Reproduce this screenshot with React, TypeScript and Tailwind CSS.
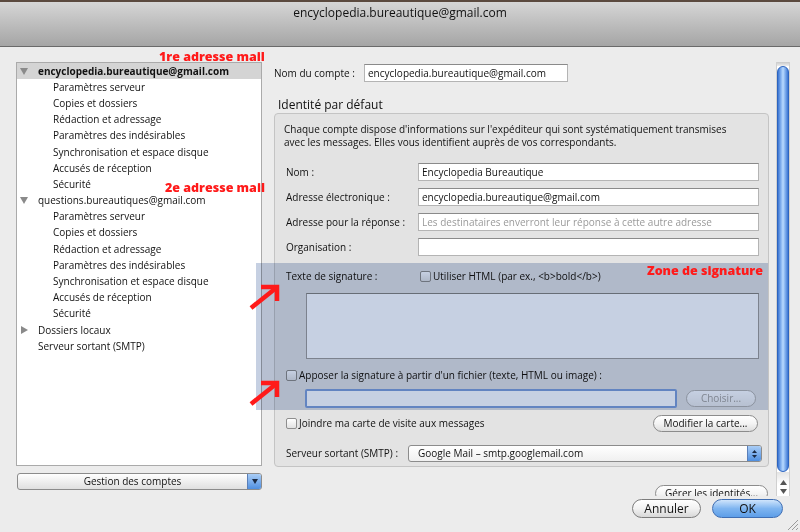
import React from 'react';

const children = [
  'Paramètres serveur',
  'Copies et dossiers',
  'Rédaction et adressage',
  'Paramètres des indésirables',
  'Synchronisation et espace disque',
  'Accusés de réception',
  'Sécurité',
];

function Tri({ open }: { open: boolean }) {
  return open ? (
    <svg width="8" height="7" viewBox="0 0 8 7">
      <path d="M0 0h8L4 7z" fill="#8a8a8a" />
    </svg>
  ) : (
    <svg width="7" height="8" viewBox="0 0 7 8">
      <path d="M0 0v8l7-4z" fill="#8a8a8a" />
    </svg>
  );
}

function Check() {
  return (
    <span className="inline-block w-[11px] h-[11px] shrink-0 rounded-[2px] border border-[#8e8e8e] bg-linear-to-b from-white to-[#e2e2e2]" />
  );
}

function Field({ value, placeholder }: { value?: string; placeholder?: string }) {
  return (
    <div className="flex-1 h-[18px] bg-white border border-[#b4b4b4] border-t-[#8a8a8a] flex items-center px-[3px] text-[10px] text-[#111] whitespace-nowrap overflow-hidden">
      {value ?? <span className="text-[#9a9a9a]">{placeholder}</span>}
    </div>
  );
}

function AquaButton({ label, className = '' }: { label: string; className?: string }) {
  return (
    <div
      className={`h-[17px] rounded-full border border-[#8c8c8c] bg-linear-to-b from-white via-[#f4f4f4] to-[#dedede] flex items-center justify-center text-[10px] text-[#111] ${className}`}
    >
      {label}
    </div>
  );
}

export default function App() {
  return (
    <div className="relative w-[800px] h-[532px] overflow-hidden bg-[#ececec] font-['Open_Sans','Noto_Sans',sans-serif] text-[#111]">
      {/* title bar */}
      <div className="h-[47px] border-t-2 border-t-[#5b4a3f] border-b border-b-[#6a6a6a] bg-linear-to-b from-[#d6d6d6] to-[#a5a5a5] flex justify-center pt-[3px]">
        <span className="text-[12px] leading-[16px] text-[#111]">encyclopedia.bureautique@gmail.com</span>
      </div>

      <div className="flex pt-[15px]">
        {/* account tree */}
        <div className="ml-[16px] w-[246px] flex flex-col">
          <div className="h-[404px] bg-white border border-[#aaaaaa]">
            {[
              { name: 'encyclopedia.bureautique@gmail.com', bold: true },
              { name: 'questions.bureautiques@gmail.com', bold: false },
            ].map((acc) => (
              <div key={acc.name}>
                <div
                  className={`h-[16.2px] flex items-center pl-[3px] text-[10px] ${acc.bold ? 'bg-[#d4d4d4] font-bold' : ''}`}
                >
                  <span className="w-[18px] flex items-center">
                    <Tri open />
                  </span>
                  {acc.name}
                </div>
                {children.map((c) => (
                  <div key={c} className="h-[16.2px] flex items-center pl-[36px] text-[10px]">
                    {c}
                  </div>
                ))}
              </div>
            ))}
            <div className="h-[16.2px] flex items-center pl-[4px] text-[10px]">
              <span className="w-[17px] flex items-center">
                <Tri open={false} />
              </span>
              Dossiers locaux
            </div>
            <div className="h-[16.2px] flex items-center pl-[21px] text-[10px]">Serveur sortant (SMTP)</div>
          </div>
          <div className="mt-[7px] ml-[1px] h-[17px] rounded-[3px] border border-[#8c8c8c] bg-linear-to-b from-white to-[#e0e0e0] flex items-center overflow-hidden">
            <span className="flex-1 text-center text-[10px]">Gestion des comptes</span>
            <span className="w-[14px] h-full bg-linear-to-b from-[#a9cdf6] to-[#4f8fe0] border-l border-[#5a7fb8] flex items-center justify-center">
              <svg width="6" height="5" viewBox="0 0 6 5">
                <path d="M0 0h6L3 5z" fill="#1a2a44" />
              </svg>
            </span>
          </div>
        </div>

        {/* right side */}
        <div className="ml-[12px] w-[516px] flex flex-col">
          <div className="h-[434px] flex overflow-hidden">
            <div className="w-[495px] flex flex-col">
              <div className="mt-[2px] h-[18px] flex items-center">
                <span className="w-[90px] text-[10px]">Nom du compte :</span>
                <div className="w-[204px] flex">
                  <Field value="encyclopedia.bureautique@gmail.com" />
                </div>
              </div>
              <div className="mt-[15px] ml-[4px] text-[12px] leading-[16px]">Identité par défaut</div>
              <div className="h-[354px] shrink-0 rounded-[4px] border border-[#c4c4c4] bg-[#e3e3e3] flex flex-col">
                <p className="pt-[9px] pl-[9px] text-[10px] leading-[13px]">
                  Chaque compte dispose d'informations sur l'expéditeur qui sont systématiquement transmises
                  <br />
                  avec les messages. Elles vous identifient auprès de vos correspondants.
                </p>
                <div className="mt-[14px] flex flex-col gap-[7px]">
                  {[
                    { l: 'Nom :', v: 'Encyclopedia Bureautique' },
                    { l: 'Adresse électronique :', v: 'encyclopedia.bureautique@gmail.com' },
                    { l: 'Adresse pour la réponse :', p: 'Les destinataires enverront leur réponse à cette autre adresse' },
                    { l: 'Organisation :', v: '' },
                  ].map((r) => (
                    <div key={r.l} className="h-[18px] flex items-center ml-[11px] mr-[9px]">
                      <span className="w-[132px] text-[10px]">{r.l}</span>
                      <Field value={r.v} placeholder={r.p} />
                    </div>
                  ))}
                </div>
                <div className="mt-[14px] h-[12px] flex items-center ml-[11px]">
                  <span className="w-[134px] text-[10px]">Texte de signature :</span>
                  <Check />
                  <span className="ml-[2px] text-[10px]">Utiliser HTML (par ex., &lt;b&gt;bold&lt;/b&gt;)</span>
                </div>
                <div className="mt-[11px] h-[66px] ml-[31px] mr-[9px] bg-white border border-[#a0a0a0] border-t-[#858585]" />
                <div className="mt-[10px] h-[12px] flex items-center ml-[11px]">
                  <Check />
                  <span className="ml-[2px] text-[10px]">Apposer la signature à partir d'un fichier (texte, HTML ou image) :</span>
                </div>
                <div className="mt-[8px] h-[19px] flex items-center ml-[30px]">
                  <div className="w-[372px] h-[19px] rounded-[2px] border-2 border-[#7ea2da] bg-white" />
                  <div className="ml-[9px] w-[70px] h-[17px] rounded-full border border-[#b4b4b4] bg-linear-to-b from-white to-[#ececec] flex items-center justify-center text-[10px] text-[#a4a4a4]">
                    Choisir...
                  </div>
                </div>
                <div className="mt-[7px] h-[17px] flex items-center ml-[11px] mr-[10px]">
                  <Check />
                  <span className="ml-[2px] text-[10px] flex-1">Joindre ma carte de visite aux messages</span>
                  <AquaButton label="Modifier la carte..." className="w-[105px]" />
                </div>
                <div className="mt-[13px] h-[17px] flex items-center ml-[11px] mr-[6px]">
                  <span className="w-[122px] text-[10px]">Serveur sortant (SMTP) :</span>
                  <div className="flex-1 h-[17px] rounded-[3px] border border-[#8c8c8c] bg-linear-to-b from-white to-[#f0f0f0] flex items-center overflow-hidden">
                    <span className="flex-1 pl-[9px] text-[10px]">Google Mail – smtp.googlemail.com</span>
                    <span className="w-[14px] h-full bg-linear-to-b from-[#a9cdf6] to-[#4f8fe0] border-l border-[#5a7fb8] flex flex-col items-center justify-center gap-[2px]">
                      <svg width="5" height="3" viewBox="0 0 5 3">
                        <path d="M0 3h5L2.5 0z" fill="#1a2a44" />
                      </svg>
                      <svg width="5" height="3" viewBox="0 0 5 3">
                        <path d="M0 0h5L2.5 3z" fill="#1a2a44" />
                      </svg>
                    </span>
                  </div>
                </div>
              </div>
              <div className="mt-[18px] self-end mr-[1px] shrink-0">
                <AquaButton label="Gérer les identités..." className="w-[113px]" />
              </div>
            </div>

            {/* scrollbar */}
            <div className="ml-[7px] w-[14px] h-full flex flex-col bg-white border-x border-[#d0d0d0]">
              <div className="h-[4px] bg-linear-to-b from-[#c8c8c8] to-[#eeeeee]" />
              <div className="h-[406px] rounded-full border border-[#2d64bf] bg-linear-to-r from-[#3a75d3] via-[#b8daff] to-[#3a75d3]" />
              <div className="flex-1 flex flex-col items-center justify-end pb-[2px] gap-[4px] bg-linear-to-b from-[#e4e4e4] via-white to-white">
                <svg width="7" height="5" viewBox="0 0 7 5">
                  <path d="M0 5h7L3.5 0z" fill="#555" />
                </svg>
                <svg width="7" height="5" viewBox="0 0 7 5">
                  <path d="M0 0h7L3.5 5z" fill="#555" />
                </svg>
              </div>
            </div>
          </div>

          <div className="mt-[3px] flex justify-end gap-[11px] mr-[7px]">
            <div className="w-[69px] h-[19px] rounded-full border border-[#7c7c7c] bg-linear-to-b from-white via-[#f2f2f2] to-[#d8d8d8] flex items-center justify-center text-[12px]">
              Annuler
            </div>
            <div className="w-[71px] h-[19px] rounded-full border border-[#3f6eb3] bg-linear-to-b from-[#cfe4fb] via-[#7fb5f0] to-[#5d9ee8] flex items-center justify-center text-[12px]">
              OK
            </div>
          </div>
        </div>
      </div>

      {/* resize grip */}
      <svg className="absolute right-[1px] bottom-[1px]" width="13" height="13" viewBox="0 0 13 13">
        <path d="M12 2L2 12M12 6L6 12M12 10L10 12" stroke="#9a9a9a" strokeWidth="1" />
      </svg>

      {/* annotations */}
      <div className="absolute left-[256px] top-[263px] w-[512px] h-[147px] bg-[#c6d0e2] mix-blend-multiply pointer-events-none" />
      <span className="absolute left-[159px] top-[48px] text-[12.5px] leading-[17px] font-extrabold text-[#ff1a1a]">1re adresse mail</span>
      <span className="absolute left-[165px] top-[179px] text-[12.5px] leading-[17px] font-extrabold text-[#ff1a1a]">2e adresse mail</span>
      <span className="absolute left-[647px] top-[262px] text-[12.5px] leading-[17px] font-extrabold text-[#ff1a1a]">Zone de signature</span>
      <svg className="absolute left-[246px] top-[282px] pointer-events-none" width="40" height="130" viewBox="0 0 40 130">
        <g stroke="#ff1a1a" strokeWidth="4.5" fill="none" strokeLinecap="butt">
          <path d="M5 26L30 6" />
          <path d="M15 5H31V19" />
          <path d="M5 122L30 102" />
          <path d="M15 101H31V115" />
        </g>
      </svg>
    </div>
  );
}
